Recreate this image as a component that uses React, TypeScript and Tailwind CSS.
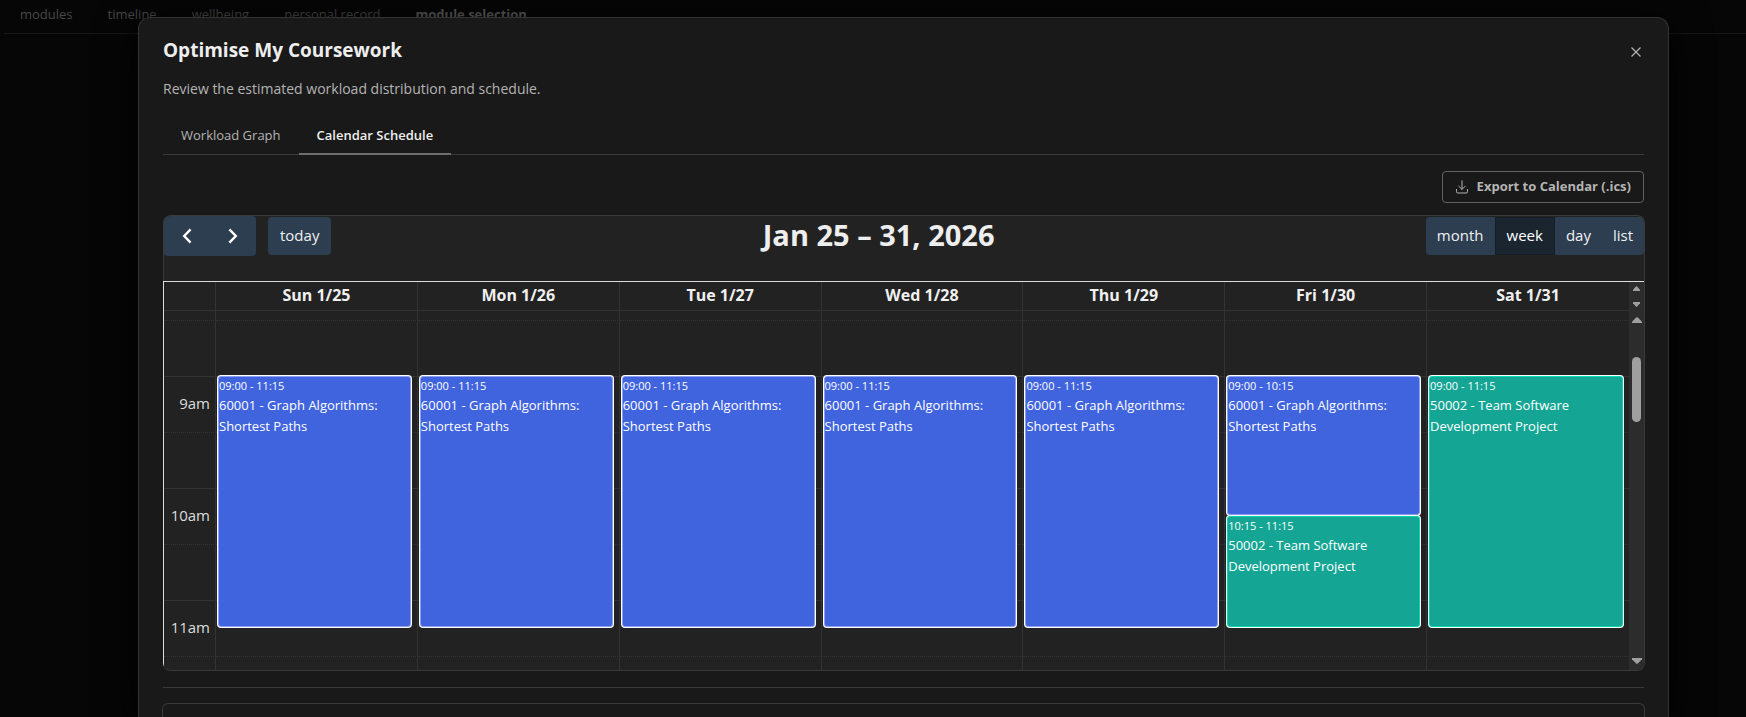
import cn from "clsx";
import { useState } from "react";

type CalendarEvent = {
  day: number;
  start: number;
  end: number;
  title: string;
  color: "blue" | "teal";
};

const SLOT_HEIGHT = 56;

const navItems = [
  "modules",
  "timeline",
  "wellbeing",
  "personal record",
  "module selection",
];

const tabs = ["Workload Graph", "Calendar Schedule"];
const views = ["month", "week", "day", "list"];

const days = [
  "Sun 1/25",
  "Mon 1/26",
  "Tue 1/27",
  "Wed 1/28",
  "Thu 1/29",
  "Fri 1/30",
  "Sat 1/31",
];

const graph = "60001 - Graph Algorithms: Shortest Paths";
const team = "50002 - Team Software Development Project";

// start and end are minutes since midnight
const events: CalendarEvent[] = [
  { day: 0, start: 540, end: 675, title: graph, color: "blue" },
  { day: 1, start: 540, end: 675, title: graph, color: "blue" },
  { day: 2, start: 540, end: 675, title: graph, color: "blue" },
  { day: 3, start: 540, end: 675, title: graph, color: "blue" },
  { day: 4, start: 540, end: 675, title: graph, color: "blue" },
  { day: 5, start: 540, end: 615, title: graph, color: "blue" },
  { day: 5, start: 615, end: 675, title: team, color: "teal" },
  { day: 6, start: 540, end: 675, title: team, color: "teal" },
];

const slots = [
  { time: 480, label: null, height: "h-[9px]" },
  { time: 510, label: null, height: "h-14" },
  { time: 540, label: "9am", height: "h-14" },
  { time: 570, label: null, height: "h-14" },
  { time: 600, label: "10am", height: "h-14" },
  { time: 630, label: null, height: "h-14" },
  { time: 660, label: "11am", height: "h-14" },
  { time: 690, label: null, height: "h-[14px]" },
];

const formatTime = (minutes: number) => {
  const h = String(Math.floor(minutes / 60)).padStart(2, "0");
  const m = String(minutes % 60).padStart(2, "0");
  return `${h}:${m}`;
};

// the extra pixel lifts the card over the top border of its slot
const EventCard = ({
  event,
  slotTime,
}: {
  event: CalendarEvent;
  slotTime: number;
}) => (
  <a
    href="#"
    style={{
      top: ((event.start - slotTime) / 30) * SLOT_HEIGHT - 1,
      height: ((event.end - event.start) / 30) * SLOT_HEIGHT - 1,
    }}
    className={cn(
      "absolute left-0.5 right-1.5 z-10 overflow-hidden rounded-[3px] border text-left text-white shadow-[0_0_0_1px_#fff]",
      event.color === "blue"
        ? "border-[#8c9ff0] bg-[#4063de]"
        : "border-[#00d9b0] bg-[#14a594]"
    )}
  >
    <div className="text-[11px] leading-[18px]">
      {formatTime(event.start)} - {formatTime(event.end)}
    </div>
    <div className="text-[13px] leading-[21px]">{event.title}</div>
  </a>
);

const WeekGrid = () => (
  <div className="min-w-0 flex-1">
    <table className="w-full table-fixed border-separate border-spacing-0">
      <thead>
        <tr className="h-[29px]">
          <th className="w-[52px] border-b border-r border-[#333] p-0"></th>
          {days.map((day, i) => (
            <th
              key={day}
              scope="col"
              className={cn(
                "border-b border-[#333] p-0 pb-0.5 text-[16px] leading-6 font-bold text-[#f0f0f0]",
                i < 6 && "border-r"
              )}
            >
              {day}
            </th>
          ))}
        </tr>
      </thead>
      <tbody>
        {slots.map((slot, row) => {
          const line =
            row === 0
              ? ""
              : slot.time % 60 === 0
              ? "border-t"
              : "border-t [border-top-style:dotted]";
          return (
            <tr key={slot.time} className={slot.height}>
              <th
                scope="row"
                className={cn(
                  "border-r border-[#333] p-0 pr-[5px] text-right text-[15px] leading-6 font-normal text-[#ddd]",
                  line,
                  slot.label && "pb-1"
                )}
              >
                {slot.label}
              </th>
              {days.map((day, i) => (
                <td
                  key={day}
                  className={cn(
                    "relative border-[#333] p-0",
                    line,
                    i < 6 && "border-r"
                  )}
                >
                  {events
                    .filter(
                      (e) =>
                        e.day === i &&
                        e.start >= slot.time &&
                        e.start < slot.time + 30
                    )
                    .map((e) => (
                      <EventCard key={e.start} event={e} slotTime={slot.time} />
                    ))}
                </td>
              ))}
            </tr>
          );
        })}
      </tbody>
    </table>
  </div>
);

const Arrow = ({ down, small }: { down?: boolean; small?: boolean }) => (
  <svg
    viewBox="0 0 9 7"
    className={cn(small ? "h-[5px] w-[7px]" : "h-1.5 w-2.5", down && "rotate-180")}
    preserveAspectRatio="none"
    aria-hidden="true"
  >
    <path d="M3.7.6Q4.5-.2 5.3.6L9 5.4V7H0V5.4Z" fill="#9f9f9f" />
  </svg>
);

const ScrollRail = () => (
  <div className="flex w-[15px] flex-col bg-[#2c2c2c]">
    <div className="flex h-[29px] flex-col items-center justify-between pt-1 pb-1">
      <Arrow small />
      <Arrow small down />
    </div>
    <div className="flex flex-1 flex-col items-center pt-1.5 pb-1.5">
      <Arrow />
      <div className="mt-[34px] h-[65px] w-[9px] rounded-full bg-[#9f9f9f]"></div>
      <div className="mt-auto flex">
        <Arrow down />
      </div>
    </div>
  </div>
);

const Chevron = ({ right }: { right?: boolean }) => (
  <svg
    viewBox="0 0 10 16"
    className={cn("h-4 w-2.5", right && "rotate-180")}
    fill="none"
    stroke="currentColor"
    strokeWidth="2.4"
    aria-hidden="true"
  >
    <path d="M8.6 1.4 2.2 8l6.4 6.6" />
  </svg>
);

const CalendarToolbar = () => {
  const [view, setView] = useState("week");

  return (
    <div className="flex h-[65px] items-start justify-between border-l border-[#3a3a3a]">
      <div className="flex items-start gap-3">
        <div className="flex h-10 overflow-hidden rounded-sm bg-[#2c3e50] text-white">
          <button
            type="button"
            aria-label="Previous week"
            className="flex w-[46px] items-center justify-center"
          >
            <Chevron />
          </button>
          <button
            type="button"
            aria-label="Next week"
            className="flex w-[46px] items-center justify-center"
          >
            <Chevron right />
          </button>
        </div>
        <button
          type="button"
          className="mt-px h-[38px] rounded-sm bg-[#2c3e50] px-3 pb-0.5 text-[15px] text-[#f0f0f0]"
        >
          today
        </button>
      </div>
      <h2 className="text-[29px] leading-[38px] font-bold text-[#eee]">
        Jan 25 – 31, 2026
      </h2>
      <div className="mt-px flex h-[38px] overflow-hidden rounded-sm bg-[#2c3e50]">
        {views.map((e) => (
          <button
            key={e}
            type="button"
            aria-pressed={view === e}
            onClick={() => setView(e)}
            className={cn(
              "px-[11px] pb-0.5 text-[15px]",
              view === e
                ? "border border-[#151e27] bg-[#1a252f] text-white"
                : "text-[#f0f0f0]"
            )}
          >
            {e}
          </button>
        ))}
      </div>
    </div>
  );
};

const CourseworkDialog = () => {
  const [tab, setTab] = useState("Calendar Schedule");

  return (
    <div
      role="dialog"
      aria-labelledby="dialog-title"
      className="mt-[17px] mr-[77px] ml-[138px] flex flex-1 flex-col rounded-t-xl border border-b-0 border-[#333] bg-[#191919] px-6 pt-5 shadow-[0_10px_40px_rgba(0,0,0,1)]"
    >
      <div className="flex items-start justify-between">
        <h1
          id="dialog-title"
          className="text-[19px] leading-6 font-bold text-[#eee]"
        >
          Optimise My Coursework
        </h1>
        <button
          type="button"
          aria-label="Close"
          className="mt-1.5 flex h-4 w-4 items-center justify-center text-[#b4b4b4]"
        >
          <svg
            viewBox="0 0 10 10"
            className="h-2.5 w-2.5"
            stroke="currentColor"
            strokeWidth="1.2"
            aria-hidden="true"
          >
            <path d="M.5.5l9 9M9.5.5l-9 9" />
          </svg>
        </button>
      </div>
      <p className="mt-[15px] text-[14px] leading-6 text-[#b4b4b4]">
        Review the estimated workload distribution and schedule.
      </p>

      <div role="tablist" className="mt-4 flex border-b border-[#3a3a3a]">
        {tabs.map((e) => (
          <button
            key={e}
            type="button"
            role="tab"
            aria-selected={tab === e}
            onClick={() => setTab(e)}
            className={cn(
              "-mb-px border-b-2 px-[18px] pt-2 pb-2 text-[13px] leading-5",
              tab === e
                ? "border-[#6e6e6e] font-semibold text-[#eee]"
                : "border-transparent text-[#b4b4b4]"
            )}
          >
            {e}
          </button>
        ))}
      </div>

      <button
        type="button"
        className="mt-4 flex h-8 items-center gap-2 self-end rounded-sm border border-[#606060] px-3 text-[13px] font-bold text-[#b4b4b4]"
      >
        <svg
          viewBox="0 0 14 14"
          className="h-3.5 w-3.5"
          fill="none"
          stroke="currentColor"
          strokeLinecap="round"
          strokeLinejoin="round"
          aria-hidden="true"
        >
          <path d="M7 .8v8.4M3.8 6.2 7 9.4l3.2-3.2M1.5 9.5v2.2q0 1.3 1.3 1.3h8.4q1.3 0 1.3-1.3V9.5" />
        </svg>
        Export to Calendar (.ics)
      </button>

      <div className="mt-3 -mr-px overflow-hidden rounded-lg border border-l-0 border-[#3a3a3a] bg-[#222]">
        <CalendarToolbar />
        <div className="flex border-t border-l border-[#ddd]">
          <WeekGrid />
          <ScrollRail />
        </div>
      </div>

      <hr className="mt-4 border-[#3a3a3a]" />
      <div className="-mx-px mt-[15px] flex-1 rounded-t-md border border-b-0 border-[#3a3a3a]"></div>
    </div>
  );
};

export default function App() {
  return (
    <div className="relative h-screen overflow-hidden bg-[#060606] font-['Open_Sans','Noto_Sans',sans-serif]">
      <nav className="ml-1 flex gap-[35px] border-b border-[#181818] px-4 pt-1 pb-2 text-[13px] leading-[21px] text-[#484848]">
        {navItems.map((e) => (
          <a
            key={e}
            href="#"
            className={e === "module selection" ? "font-bold text-[#5a5a5a]" : ""}
          >
            {e}
          </a>
        ))}
      </nav>
      <div className="absolute inset-0 flex flex-col">
        <CourseworkDialog />
      </div>
    </div>
  );
}
